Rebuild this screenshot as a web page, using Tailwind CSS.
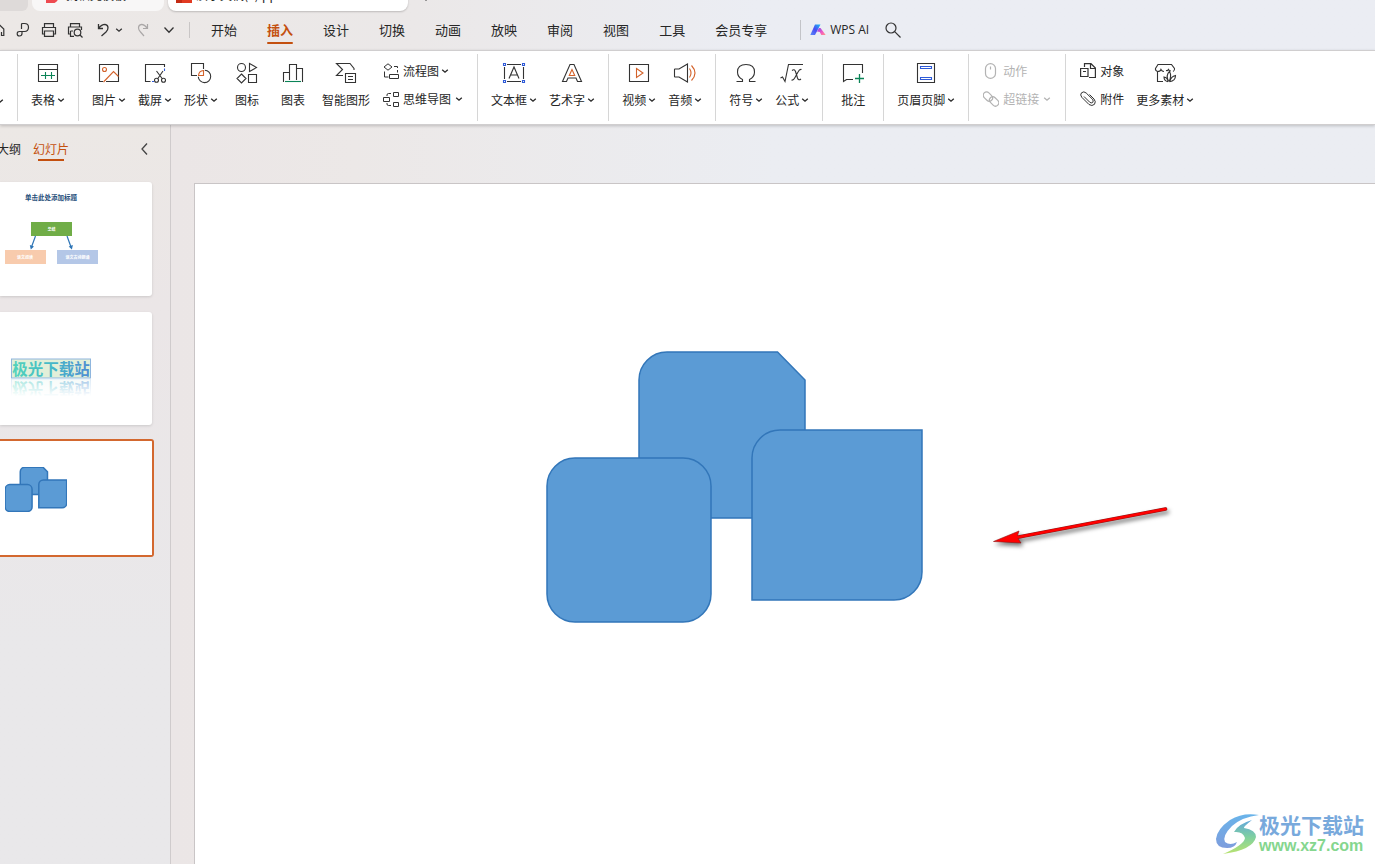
<!DOCTYPE html>
<html lang="zh-CN">
<head>
<meta charset="utf-8">
<meta name="viewport" content="width=device-width, initial-scale=1">
<title>WPS 演示</title>
<script src="https://cdn.jsdelivr.net/npm/@tailwindcss/browser@4"></script>
</head>
<body class="flex h-screen flex-col overflow-hidden bg-[#ebe8e8] font-['Noto_Sans_CJK_SC',sans-serif] text-xs text-[#262626]">

<svg class="hidden" aria-hidden="true">
  <symbol id="chev" viewBox="0 0 8 8"><path d="M1.2 2.8 4 5.2 6.8 2.8" fill="none" stroke="currentColor" stroke-width="1.300"/></symbol>
  <symbol id="shapes" viewBox="0 0 378 274">
    <g fill="#5b9bd5" stroke="#3276b9" stroke-width="1.500">
      <path vector-effect="non-scaling-stroke" d="M93 29A28 28 0 0 1 121 1H231.500L259 29V167H93Z"/>
      <rect vector-effect="non-scaling-stroke" x="1" y="107" width="164" height="164" rx="28"/>
      <path vector-effect="non-scaling-stroke" d="M206 107A28 28 0 0 1 234 79H376V221A28 28 0 0 1 348 249H206Z"/>
    </g>
  </symbol>
</svg>

<header class="shrink-0 bg-linear-to-r from-[#ece8e6] via-[#ebe8e8] via-30% to-[#ebedf3] to-55%">
  <!-- document tabs -->
  <div class="flex h-[11px] items-end">
    <div class="h-8 w-7 shrink-0 rounded-br-md bg-[#dedad9]"></div>
    <button class="ml-1 flex h-8 w-[132px] shrink-0 items-center gap-1.5 rounded-b-lg bg-[#f8f7f7] pl-3 text-xs">
      <svg class="size-4 shrink-0" viewBox="0 0 16 16"><path d="M2 0h13v8c0 6-4 9-9 9H2Z" fill="#ee4a50"/></svg>
      <span class="whitespace-nowrap">找稻壳模板</span>
    </button>
    <button class="ml-1 flex h-8 w-60 shrink-0 items-center gap-1 rounded-b-lg bg-white pl-2 text-xs shadow-[0_1px_2px_#0003]">
      <svg class="size-4 shrink-0" viewBox="0 0 16 16"><path d="M0 0h16v16H0Z" fill="#e23b22"/><path d="M0 12h6v4H0Z" fill="#c42b14"/></svg>
      <span class="whitespace-nowrap">演示文稿(1).ppt</span>
    </button>
    <button class="ml-3 flex h-8 items-center" aria-label="新建标签">
      <svg class="size-3" viewBox="0 0 12 12"><path d="M6 1v11M1 6h11" stroke="#444" fill="none"/></svg>
    </button>
  </div>

  <!-- quick access bar and menu -->
  <div class="flex h-[39px] items-center pb-px">
    <div class="-ml-[11px] flex w-[200px] shrink-0 items-center gap-2.5 text-[#333]">
      <button aria-label="保存"><svg class="size-4" viewBox="0 0 16 16" fill="none" stroke="currentColor" stroke-width="1.200"><path d="M5 7.500 10 2.500 14.800 7V13.500H12.500V10"/></svg></button>
      <button aria-label="输出为PDF"><svg class="size-4" viewBox="0 0 16 16" fill="none" stroke="currentColor" stroke-width="1.200"><path d="M6.500 7V2.500Q6.500 1.500 7.500 1.500H9.500Q13.500 1.500 13.500 5.300 13.500 9.500 9.500 9.500H4.500Q2.200 9.500 2.200 11.700 2.200 14 4.500 14 7 14 7 11.500V10"/></svg></button>
      <button aria-label="打印"><svg class="size-4" viewBox="0 0 16 16" fill="none" stroke="currentColor" stroke-width="1.200"><path d="M3.500 5.500V1.600H12.500V5.500M3.500 12H1.500V5.500H14.500V12H12.500"/><path d="M3.500 9H12.500V14.400H3.500Z"/></svg></button>
      <button aria-label="打印预览"><svg class="size-4" viewBox="0 0 16 16" fill="none" stroke="currentColor" stroke-width="1.200"><path d="M3.500 5V1.600H12.500V5M3.500 12H1.500V5H14.500V8M3.500 9H6M3.500 9V14.400H7"/><circle cx="10.500" cy="10.500" r="3.300"/><path d="M13 13l2.500 2.500"/></svg></button>
      <button class="ml-0.5 flex items-center gap-1" aria-label="撤销"><svg class="size-4" viewBox="0 0 16 16" fill="none" stroke="currentColor" stroke-width="1.300"><path d="M3.500 2V6.500H8M3.800 6.200Q6.500 2.300 10 2.300 13 2.800 13 5.800 13 8 11 10L6.500 14"/></svg><svg class="size-2"><use href="#chev"/></svg></button>
      <button class="ml-0.5 text-[#aaa7a7]" aria-label="恢复"><svg class="size-4" viewBox="0 0 16 16" fill="none" stroke="currentColor" stroke-width="1.200"><path d="M12.500 2V6.500H8M12.200 6.200Q9.500 2.300 6.500 2.300 3.500 2.800 3.500 5.800 3.500 8 5.500 10L9 14"/></svg></button>
      <button aria-label="更多"><svg class="size-4" viewBox="0 0 16 16" fill="none" stroke="currentColor" stroke-width="1.300"><path d="M3.500 5.500 8 10.200 12.500 5.500"/></svg></button>
    </div>
    <nav class="flex h-full flex-1 items-center text-[13px] leading-5" aria-label="菜单">
      <span class="mr-1.5 h-4 w-px bg-[#c9c6c6]"></span>
      <button class="px-[15px]">开始</button>
      <button class="relative px-[15px] font-bold text-[#c4500f]">插入<span class="absolute inset-x-[15px] top-[22px] h-0.5 rounded-sm bg-[#c4500f]"></span></button>
      <button class="px-[15px]">设计</button>
      <button class="px-[15px]">切换</button>
      <button class="px-[15px]">动画</button>
      <button class="px-[15px]">放映</button>
      <button class="px-[15px]">审阅</button>
      <button class="px-[15px]">视图</button>
      <button class="px-[15px]">工具</button>
      <button class="px-[15px]">会员专享</button>
      <span class="ml-[18px] h-5 w-px bg-[#c3c4c8]"></span>
      <button class="ml-[9px] flex items-center gap-1 font-['Open_Sans','Noto_Sans',sans-serif] text-xs">
        <svg class="size-4" viewBox="0 0 16 16">
          <defs><linearGradient id="ai1" x1="1" y1="0" x2="0" y2="1"><stop stop-color="#18c0f5"/><stop offset=".5" stop-color="#4a4bf2"/><stop offset="1" stop-color="#5b8df8"/></linearGradient><linearGradient id="ai2" x2="1" y2="1"><stop stop-color="#7a45f5"/><stop offset=".6" stop-color="#f55bc0"/><stop offset="1" stop-color="#ff9a80"/></linearGradient></defs>
          <path d="M5 2.500h5.500L5 13H.3Z" fill="url(#ai1)"/><path d="M10.500 6 15.700 13H11.300L9.800 10 7 9.500 9 6Z" fill="url(#ai2)"/>
        </svg>WPS AI</button>
      <button class="ml-[15px] text-[#333]" aria-label="搜索"><svg class="size-[18px]" viewBox="0 0 18 18" fill="none" stroke="currentColor" stroke-width="1.200"><circle cx="7" cy="7" r="5"/><path d="M10.700 10.700 16.500 16.500"/></svg></button>
    </nav>
  </div>
</header>

<!-- ribbon -->
<section class="z-10 flex h-[75px] shrink-0 whitespace-nowrap border-y border-[#d0cecf] bg-white py-[3px] leading-4 shadow-[0_1px_3px_#0003]" aria-label="插入">
  <div class="flex w-[18px] shrink-0 items-center border-r border-[#d6d6d6]"><svg class="-ml-1 mt-[26px] size-2 shrink-0"><use href="#chev"/></svg></div>

  <div class="flex shrink-0 border-r border-[#d6d6d6] px-[7px] pt-[7px]">
    <button class="flex min-w-[46px] flex-col items-center gap-[7px] px-1.5"><svg class="size-6" viewBox="0 0 24 24" fill="none" stroke="#333" stroke-width="1.100"><path d="M2.500 3.500H21.500V20.500H2.500ZM2.500 8.500H21.500"/><path d="M5 14.500H19M9.500 11V18M15.500 11V18" stroke="#0b8457"/></svg><span class="flex items-center gap-0.5">表格<svg class="size-2"><use href="#chev"/></svg></span></button>
  </div>

  <div class="flex shrink-0 border-r border-[#d6d6d6] px-[7px] pt-[7px]">
    <button class="flex min-w-[46px] flex-col items-center gap-[7px] px-1.5"><svg class="size-6" viewBox="0 0 24 24" fill="none" stroke="#333" stroke-width="1.100"><path d="M6 20.500H2.500V3.500H21.500V20.500H9"/><path d="M6.500 21 16.500 10.500 21.500 15.500" stroke="#d3622a"/><circle cx="7.500" cy="8.500" r="2" stroke="#d3622a"/></svg><span class="flex items-center gap-0.5">图片<svg class="size-2"><use href="#chev"/></svg></span></button>
    <button class="flex min-w-[46px] flex-col items-center gap-[7px] px-1.5"><svg class="size-6" viewBox="0 0 24 24" fill="none" stroke="#333" stroke-width="1.100"><path d="M7.500 20.500H2.500V3.500H21.500V6"/><path d="M9 20.500h2M21.500 7.500v2.500" stroke="#2f5bd8"/><path d="M13.500 10 19.500 18M20 10 14.500 18"/><circle cx="13.500" cy="19.300" r="2"/><circle cx="20.500" cy="19.300" r="2"/></svg><span class="flex items-center gap-0.5">截屏<svg class="size-2"><use href="#chev"/></svg></span></button>
    <button class="flex min-w-[46px] flex-col items-center gap-[7px] px-1.5"><svg class="size-6" viewBox="0 0 24 24" fill="none" stroke="#333" stroke-width="1.100"><path d="M8 14.500H2.500V2.500H14.500V8"/><path d="M15.800 9.200A6.200 6.200 0 1 1 9.300 15.700"/><path d="M9.500 14.500A5.500 5.500 0 0 1 14.500 9.500V14.500Z" stroke="#d3622a"/></svg><span class="flex items-center gap-0.5">形状<svg class="size-2"><use href="#chev"/></svg></span></button>
    <button class="flex min-w-[46px] flex-col items-center gap-[7px] px-1.5"><svg class="size-6" viewBox="0 0 24 24" fill="none" stroke="#333" stroke-width="1.100"><circle cx="6.500" cy="6.500" r="4"/><path d="M14.500 2.500 21.500 6.500 14.500 10.500ZM6.500 13 11 17.500 6.500 22 2 17.500ZM13.500 13.500H21.500V21.500H13.500Z"/></svg><span>图标</span></button>
    <button class="flex min-w-[46px] flex-col items-center gap-[7px] px-1.5"><svg class="size-6" viewBox="0 0 24 24" fill="none" stroke="#333" stroke-width="1.100"><path d="M2.500 21V11.500H8.500M8.500 19V3.500H15.500V19M15.500 7.500H21.500V21"/><path d="M4 20.500H20" stroke="#0b8457"/></svg><span>图表</span></button>
    <button class="flex min-w-[46px] flex-col items-center gap-[7px] px-1.5"><svg class="size-6" viewBox="0 0 24 24" fill="none" stroke="#333" stroke-width="1.100"><path d="M20 9V7.500L16 2.500H2.500L8.500 8.500 2.500 14.500H9"/><path d="M11.500 12.500H21.500V21.500H11.500ZM14 15.500H19M14 18.500H19"/></svg><span>智能图形</span></button>
    <div class="flex flex-col gap-3 px-[7px] pt-0.5">
      <button class="flex items-center gap-1"><svg class="size-4" viewBox="0 0 16 16" fill="none" stroke="#333"><path d="M5 .8 9 4 5 7.200 1 4ZM1.500 8.500V14H5.500M6.500 11.500H15.500V15.500H6.500ZM11 3.500H14.500V5M14.500 7V9.500"/></svg><span class="flex items-center gap-0.5">流程图<svg class="size-2"><use href="#chev"/></svg></span></button>
      <button class="flex items-center gap-1"><svg class="size-4" viewBox="0 0 16 16" fill="none" stroke="#333"><path d="M.5 6.500H6.500V10.500H.5ZM10.500 1.500H15.500V5.500H10.500ZM10.500 11.500H15.500V15.500H10.500ZM4 5V4Q4 2.500 5.500 2.500H8M4 12V13Q4 14.500 5.500 14.500H8"/></svg>思维导图<svg class="size-2"><use href="#chev"/></svg></button>
    </div>
  </div>

  <div class="flex shrink-0 border-r border-[#d6d6d6] px-[7px] pt-[7px]">
    <button class="flex min-w-[46px] flex-col items-center gap-[7px] px-1.5"><svg class="size-6" viewBox="0 0 24 24" fill="none" stroke="#333" stroke-width="1.100"><path d="M5 3.500H19M5 20.500H19M2.500 6V18M21.500 6V18M7 17.500 12 6 17 17.500M8.500 14H15.500"/><path d="M1.500 2.500h2v2h-2zM20.500 2.500h2v2h-2zM1.500 19.500h2v2h-2zM20.500 19.500h2v2h-2z" stroke="#2f5bd8"/></svg><span class="flex items-center gap-0.5">文本框<svg class="size-2"><use href="#chev"/></svg></span></button>
    <button class="flex min-w-[46px] flex-col items-center gap-[7px] px-1.5"><svg class="size-6" viewBox="0 0 24 24" fill="none" stroke="#333" stroke-width="1.100"><path d="M2.500 20.500 10 3.500H14L21.500 20.500H17.500L16 17H8L6.500 20.500Z"/><path d="M12 8.500 9.300 14.500H14.700Z" stroke="#d3622a"/></svg><span class="flex items-center gap-0.5">艺术字<svg class="size-2"><use href="#chev"/></svg></span></button>
  </div>

  <div class="flex shrink-0 border-r border-[#d6d6d6] px-[7px] pt-[7px]">
    <button class="flex min-w-[46px] flex-col items-center gap-[7px] px-1.5"><svg class="size-6" viewBox="0 0 24 24" fill="none" stroke="#333" stroke-width="1.100"><path d="M2.500 3.500H21.500V20.500H2.500Z"/><path d="M9.500 7.500 16 12 9.500 16.500Z" stroke="#d3622a"/></svg><span class="flex items-center gap-0.5">视频<svg class="size-2"><use href="#chev"/></svg></span></button>
    <button class="flex min-w-[46px] flex-col items-center gap-[7px] px-1.5"><svg class="size-6" viewBox="0 0 24 24" fill="none" stroke="#333" stroke-width="1.100"><path d="M1.500 8.500Q1.500 8 2 8H6L14.500 3V21L6 16H2Q1.500 16 1.500 15.500Z"/><path d="M16.500 7.500Q19.500 12 16.500 16.500M18.500 4.500Q25.500 12 18.500 19.500" stroke="#d3622a"/></svg><span class="flex items-center gap-0.5">音频<svg class="size-2"><use href="#chev"/></svg></span></button>
  </div>

  <div class="flex shrink-0 border-r border-[#d6d6d6] px-[7px] pt-[7px]">
    <button class="flex min-w-[46px] flex-col items-center gap-[7px] px-1.5"><svg class="size-6" viewBox="0 0 24 24" fill="none" stroke="#333" stroke-width="1.100"><path d="M2.500 20.500H8.500V18.500Q3.500 16 3.500 11 3.500 3.500 12 3.500T20.500 11Q20.500 16 15.500 18.500V20.500H21.500"/></svg><span class="flex items-center gap-0.5">符号<svg class="size-2"><use href="#chev"/></svg></span></button>
    <button class="flex min-w-[46px] flex-col items-center gap-[7px] px-1.5"><svg class="size-6" viewBox="0 0 24 24" fill="none" stroke="#333" stroke-width="1.100"><path d="M.5 17 2.500 16 5 20.500 8.500 3.500H23M12 9.500Q14.500 7.500 15.500 10.500L17.500 17Q18.500 20 21 18M21.500 8.500Q19.500 8 18 11L15 16.500Q13.500 19.500 11.500 19"/></svg><span class="flex items-center gap-0.5">公式<svg class="size-2"><use href="#chev"/></svg></span></button>
  </div>

  <div class="flex shrink-0 border-r border-[#d6d6d6] px-[7px] pt-[7px]">
    <button class="flex min-w-[46px] flex-col items-center gap-[7px] px-1.5"><svg class="size-6" viewBox="0 0 24 24" fill="none" stroke="#333" stroke-width="1.100"><path d="M21.500 12V3.500H2.500V20.500L5.500 18.500H12"/><path d="M18.500 13V22M14 17.500H23" stroke="#0b8457" stroke-width="1.300"/></svg><span>批注</span></button>
  </div>

  <div class="flex shrink-0 border-r border-[#d6d6d6] px-[7px] pt-[7px]">
    <button class="flex min-w-[46px] flex-col items-center gap-[7px] px-1.5"><svg class="size-6" viewBox="0 0 24 24" fill="none" stroke="#333" stroke-width="1.100"><path d="M3.500 2.500H20.500V21.500H3.500Z"/><path d="M6.500 5.500H17.500V7.500H6.500ZM6.500 16.500H17.500V18.500H6.500Z" stroke="#2f5bd8"/></svg><span class="flex items-center gap-0.5">页眉页脚<svg class="size-2"><use href="#chev"/></svg></span></button>
  </div>

  <div class="flex shrink-0 border-r border-[#d6d6d6] px-[7px] pt-[7px]">
    <div class="flex flex-col gap-3 px-[7px] pt-0.5 text-[#b3b3b3]">
      <button class="flex items-center gap-1" disabled><svg class="size-4" viewBox="0 0 16 16" fill="none" stroke="currentColor" stroke-width="1.200"><rect x="2.500" y=".6" width="10" height="14.800" rx="5"/><path d="M7.500 3.500V6.500"/></svg>动作</button>
      <button class="flex items-center gap-1" disabled><svg class="size-4" viewBox="0 0 16 16" fill="none" stroke="currentColor" stroke-width="1.200"><rect x="-.3" y="2.300" width="10.400" height="6.600" rx="3.300" transform="rotate(45 4.900 5.600)"/><rect x="5.900" y="7.100" width="10.400" height="6.600" rx="3.300" transform="rotate(45 11.100 10.400)"/></svg><span class="flex items-center gap-0.5">超链接<svg class="ml-0.5 size-2"><use href="#chev"/></svg></span></button>
    </div>
  </div>

  <div class="flex shrink-0 px-[7px] pt-[7px]">
    <div class="flex flex-col gap-3 px-[7px] pt-0.5">
      <button class="flex items-center gap-1"><svg class="size-4" viewBox="0 0 16 16" fill="none" stroke="#333" stroke-width="1.200"><path d="M4.500 4V.7H11L15.400 5V14.500H9M10.500 1V5.500H15M.6 5.500H8V13.500H.6ZM3 8.500H6"/></svg>对象</button>
      <button class="flex items-center gap-1"><svg class="size-4" viewBox="0 0 16 16" fill="none" stroke="#333"><path d="M9.500 3.500 14 8Q16.300 10.700 14.500 13.300 12 15.600 9 13.500L1.800 6.300Q-.3 3.800 1.500 1.800 3.800-.2 6.200 2L12.500 8.300Q13.800 10 12.700 11.500 11.200 12.500 9.700 11.200L4 5.500"/></svg>附件</button>
    </div>
    <button class="-ml-px flex flex-col items-center gap-[7px] px-1.5"><svg class="size-6" viewBox="0 0 24 24" fill="none" stroke="#333" stroke-width="1.100"><path d="M10 20.500H4.500V10.500Q2 9.500 2.500 7.500L5 3.500H18.500L21.500 7.500Q22 9.500 20 10.500M4.500 10.500Q7.500 10.500 8 8.500 9 10.500 11 10.500M13 9.500Q15 10 15.500 8.500 16.500 10 18 10"/><path d="M15.500 20.500Q12.500 14 16.500 10.500 19 15 16 20.500M17 20Q18 15.500 22.500 14.500 22.500 20 16.500 20.700M15 20.500Q14.500 16.500 11 16 11 20 15 20.700"/></svg><span class="flex items-center gap-0.5">更多素材<svg class="size-2"><use href="#chev"/></svg></span></button>
  </div>
</section>

<main class="flex min-h-0 flex-1">
  <!-- slide list -->
  <aside class="flex w-[171px] shrink-0 flex-col overflow-hidden border-r border-[#cfcbcc] bg-linear-to-b from-[#ece8e5] via-[#ebe6e7] via-25% to-[#e9e8ea] to-70%">
    <div class="flex h-[57px] shrink-0 items-start pt-[15px] leading-[18px]">
      <button class="-ml-[3px] whitespace-nowrap">大纲</button>
      <button class="relative ml-3 whitespace-nowrap text-[#c4500f]">幻灯片<span class="absolute inset-x-[5px] top-[19px] h-0.5 bg-[#c4500f]"></span></button>
      <button class="ml-auto mr-[18px] mt-0.5" aria-label="收起"><svg class="size-3.5" viewBox="0 0 14 14" fill="none" stroke="#444" stroke-width="1.300"><path d="M9 1.500 4 7 9 12.500"/></svg></button>
    </div>
    <button class="mr-[18px] h-[114px] shrink-0 rounded-r-[3px] bg-white shadow-[0_1px_3px_#0002]" aria-label="幻灯片 1">
      <svg class="h-full w-full" viewBox="0 0 152 114" font-weight="700" text-anchor="middle">
        <text x="51" y="18" font-size="6.500" fill="#1f4e79">单击此处添加标题</text>
        <path d="M31 40h41v14H31z" fill="#70ad47"/><path d="M5 68h41v14H5z" fill="#f8cbad"/><path d="M57 68h41v14H57z" fill="#b4c7e7"/>
        <path d="M35.500 54 31.500 65M67 54 71 65" stroke="#2e75b6" stroke-width="1.200"/><path d="M29.800 63 34 64.500 30.800 67.500ZM68.700 64.500 72.900 63 71.900 67.500Z" fill="#2e75b6"/>
        <g font-size="4" fill="#fff"><text x="51.500" y="49">总结</text><text x="25" y="77">语文阅读</text><text x="77.500" y="77">语文古诗朗诵</text></g>
      </svg>
    </button>
    <button class="mr-[18px] mt-4 h-[113px] shrink-0 rounded-r-[3px] bg-white shadow-[0_1px_3px_#0002]" aria-label="幻灯片 2">
      <svg class="h-full w-full" viewBox="0 0 152 113" font-weight="700" font-size="15.500" text-anchor="middle">
        <defs>
          <linearGradient id="wa"><stop stop-color="#52d3ba"/><stop offset=".5" stop-color="#45b9c8"/><stop offset="1" stop-color="#4f8dd3"/></linearGradient>
          <linearGradient id="fd" x2="0" y2="1"><stop stop-color="#fff" stop-opacity=".5"/><stop offset=".85" stop-color="#fff"/></linearGradient>
        </defs>
        <rect x="11.500" y="47" width="79" height="19" fill="#e2efd9" stroke="#8fb6de"/>
        <text x="51" y="62.500" fill="url(#wa)">极光下载站</text>
        <g transform="matrix(1 0 0 -1 0 133)" aria-hidden="true"><rect x="11.500" y="47" width="79" height="19" fill="#eff7f3" stroke="#bcd6ee"/><text x="51" y="62.500" fill="url(#wa)">极光下载站</text></g>
        <path d="M10 66.800H92V87.500H10z" fill="url(#fd)"/>
      </svg>
    </button>
    <button class="mr-4 mt-3.5 h-[118px] shrink-0 rounded-r-[3px] border-2 border-l-0 border-[#d3682f] bg-white" aria-label="幻灯片 3" aria-current="true">
      <svg class="h-full w-full" viewBox="0 0 152 114"><use href="#shapes" x="5" y="26" width="62" height="45"/></svg>
    </button>
  </aside>

  <!-- editing canvas -->
  <section class="flex min-w-0 flex-1 bg-linear-to-r from-[#ebe6e6] via-[#ece8e7] via-15% to-[#ebedf2] to-50% pl-[23px] pt-[58px]" aria-label="编辑区">
    <div class="relative flex-1 overflow-hidden border-l border-t border-[#c9c5c6] bg-white">
      <svg class="absolute left-[351px] top-[167px] h-[274px] w-[378px]" role="img" aria-label="三个形状"><use href="#shapes"/></svg>
      <svg class="absolute left-[785px] top-[311px] h-[60px] w-[200px]" viewBox="0 0 200 60" role="img" aria-label="箭头">
        <g class="drop-shadow-[2px_3px_2px_#0008]"><path d="M36 42.500 185.500 14" stroke="#8d1414" stroke-width="3.600" stroke-linecap="round"/><path d="M13.500 46.500 39 36 37 42 41 48Z" fill="#f00" stroke="#8d1414" stroke-width=".6"/><path d="M36 42.500 185.500 14" stroke="#f00" stroke-width="2.600" stroke-linecap="round"/></g>
      </svg>
      <div class="absolute bottom-2 right-[11px] flex items-center">
        <svg class="size-11" viewBox="0 0 44 44" aria-hidden="true">
          <defs><linearGradient id="lg" x2="0" y2="1"><stop stop-color="#69b4ea"/><stop offset="1" stop-color="#7e9ddd"/></linearGradient><linearGradient id="lg2" x2="0" y2="1"><stop stop-color="#62a6dd"/><stop offset=".5" stop-color="#7fd0a0"/><stop offset="1" stop-color="#b9e36f"/></linearGradient></defs>
          <path d="M44 3Q28 0 15 8 2 17 1 27 1 36 12 36 20 36 22 30 15 34 10 30 7 24 17 14 27 5 44 3Z" fill="url(#lg)"/>
          <path d="M19 20Q23 12 37 8 28 15 29 16 41 18 41 25 38 38 8 42 29 33 30 26 28 19 19 20Z" fill="url(#lg2)"/>
        </svg>
        <div>
          <div class="whitespace-nowrap text-[21px] font-bold leading-6 text-[#78a9dc]">极光下载站</div>
          <div class="font-['Liberation_Sans',Arial,sans-serif] text-base font-bold leading-5 text-[#85d68e]">www.xz7.com</div>
        </div>
      </div>
    </div>
  </section>
</main>
</body>
</html>
